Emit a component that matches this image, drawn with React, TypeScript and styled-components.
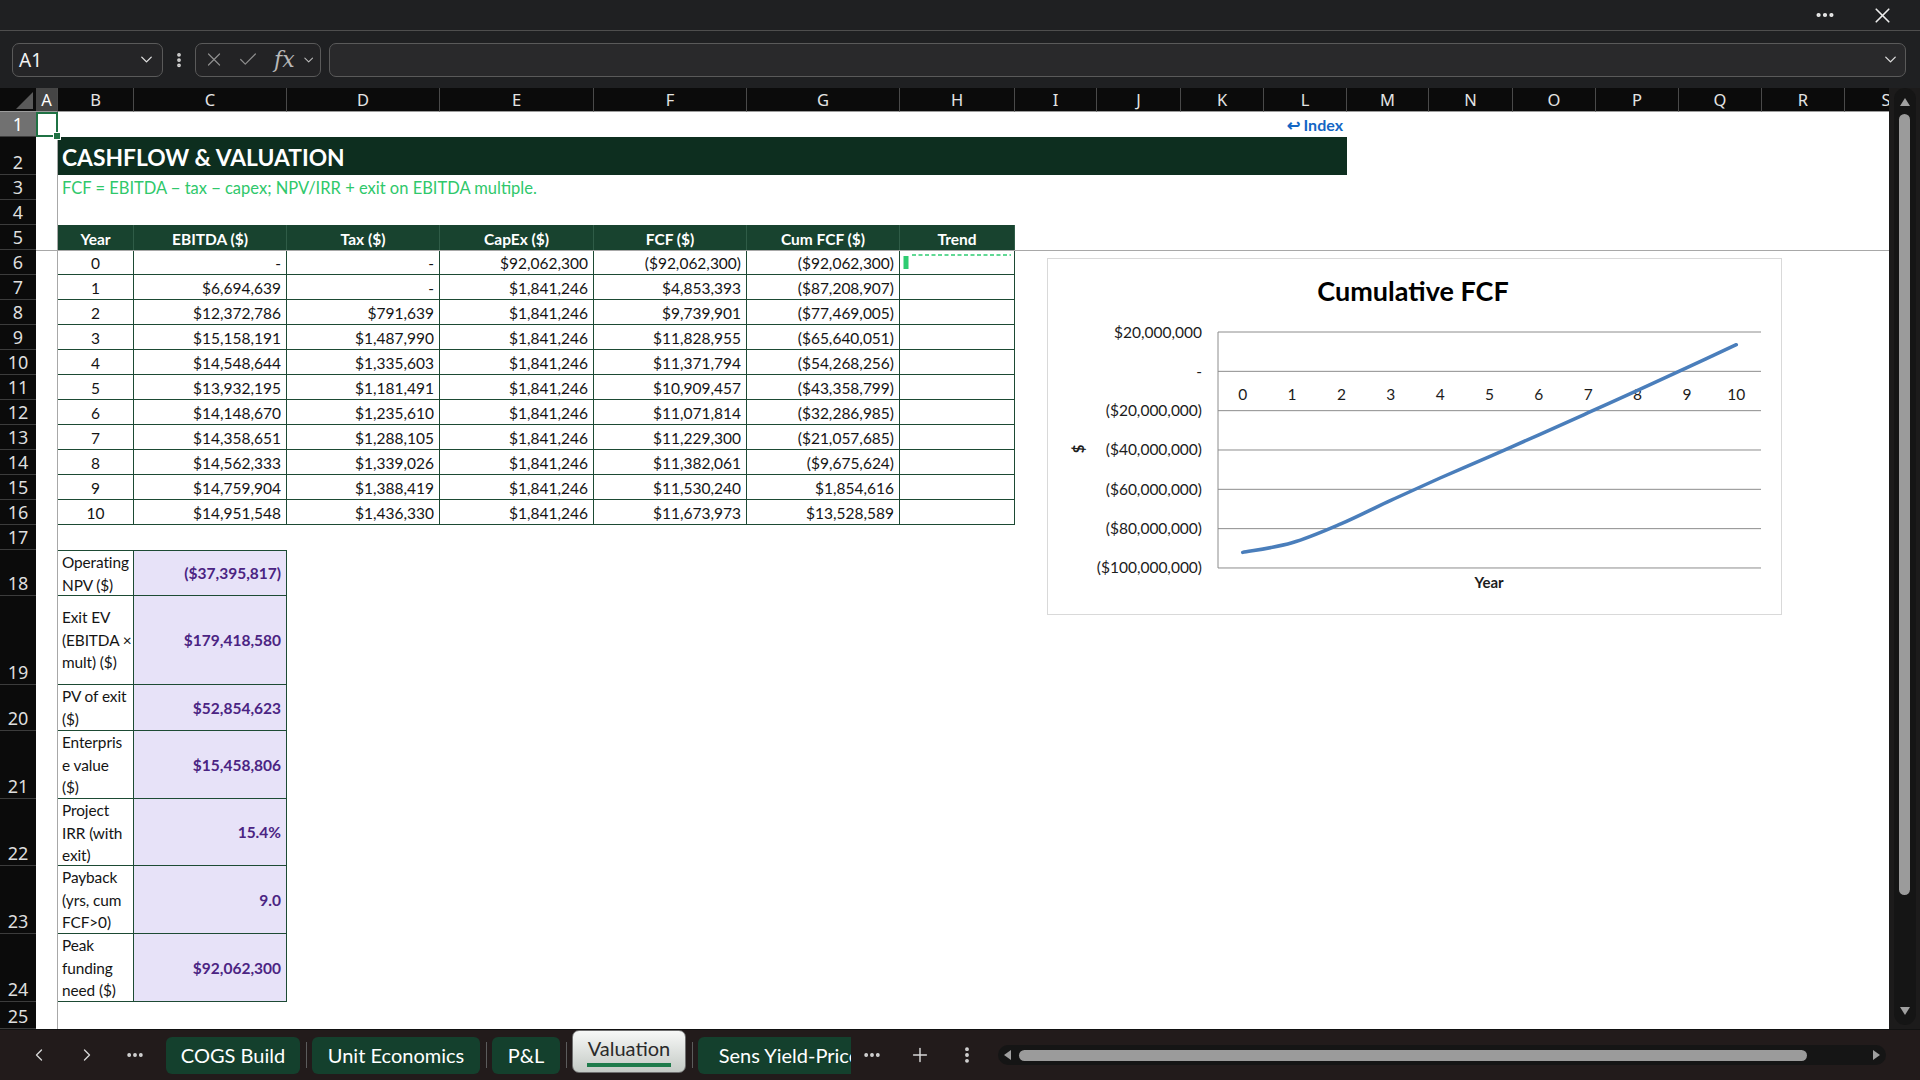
import React from "react";
import styled, { createGlobalStyle } from "styled-components";
import {
  ChevronDown,
  ChevronLeft,
  ChevronRight,
  Ellipsis,
  EllipsisVertical,
  X,
  Check,
  Plus,
} from "lucide-react";

const GlobalStyle = createGlobalStyle`
  html, body { margin: 0; padding: 0; background: #1f2022; overflow: hidden; }
  #root { width: 1920px; height: 1080px; }
  * { box-sizing: border-box; }
`;

const COLS = [36, 22, 76, 153, 153, 154, 153, 153, 115, 82, 84, 83, 83, 82, 84, 83, 83, 83, 83, 83];
const COL_TEMPLATE = COLS.map((w) => `${w}px`).join(" ");
const LETTERS = "ABCDEFGHIJKLMNOPQRS".split("");

const CELL_FONT = `Lato, "Noto Sans", sans-serif`;
const UI_FONT = `"Noto Sans", "Open Sans", sans-serif`;
const GREEN_LINE = "#1d4a34";

const TABLE = [
  ["0", "-", "-", "$92,062,300", "($92,062,300)", "($92,062,300)"],
  ["1", "$6,694,639", "-", "$1,841,246", "$4,853,393", "($87,208,907)"],
  ["2", "$12,372,786", "$791,639", "$1,841,246", "$9,739,901", "($77,469,005)"],
  ["3", "$15,158,191", "$1,487,990", "$1,841,246", "$11,828,955", "($65,640,051)"],
  ["4", "$14,548,644", "$1,335,603", "$1,841,246", "$11,371,794", "($54,268,256)"],
  ["5", "$13,932,195", "$1,181,491", "$1,841,246", "$10,909,457", "($43,358,799)"],
  ["6", "$14,148,670", "$1,235,610", "$1,841,246", "$11,071,814", "($32,286,985)"],
  ["7", "$14,358,651", "$1,288,105", "$1,841,246", "$11,229,300", "($21,057,685)"],
  ["8", "$14,562,333", "$1,339,026", "$1,841,246", "$11,382,061", "($9,675,624)"],
  ["9", "$14,759,904", "$1,388,419", "$1,841,246", "$11,530,240", "$1,854,616"],
  ["10", "$14,951,548", "$1,436,330", "$1,841,246", "$11,673,973", "$13,528,589"],
];

const HEADERS = ["Year", "EBITDA ($)", "Tax ($)", "CapEx ($)", "FCF ($)", "Cum FCF ($)", "Trend"];

/* label lines as the wrapped cell shows them */
const METRICS: { lines: string[]; value: string; h: number }[] = [
  { lines: ["Operating", "NPV ($)"], value: "($37,395,817)", h: 46 },
  { lines: ["Exit EV", "(EBITDA ×", "mult) ($)"], value: "$179,418,580", h: 89 },
  { lines: ["PV of exit", "($)"], value: "$52,854,623", h: 46 },
  { lines: ["Enterpris", "e value", "($)"], value: "$15,458,806", h: 68 },
  { lines: ["Project", "IRR (with", "exit)"], value: "15.4%", h: 67 },
  { lines: ["Payback", "(yrs, cum", "FCF>0)"], value: "9.0", h: 68 },
  { lines: ["Peak", "funding", "need ($)"], value: "$92,062,300", h: 68 },
];

const CUM = [-92.0623, -87.208907, -77.469005, -65.640051, -54.268256, -43.358799, -32.286985, -21.057685, -9.675624, 1.854616, 13.528589];

/* ---------- window chrome ---------- */

const Window = styled.div`
  width: 1920px;
  height: 1080px;
  display: flex;
  flex-direction: column;
  background: #1f2022;
  font-family: ${UI_FONT};
  overflow: hidden;
`;

const TitleBar = styled.div`
  height: 31px;
  flex: none;
  border-bottom: 1px solid #4e4e4e;
  display: flex;
  align-items: center;
  justify-content: flex-end;
  padding-right: 15px;
  gap: 11px;
  color: #ececec;
`;

const TitleBtn = styled.div`
  width: 46px;
  height: 30px;
  display: flex;
  align-items: center;
  justify-content: center;
`;

const FormulaBar = styled.div`
  height: 57px;
  flex: none;
  display: flex;
  align-items: center;
  padding: 0 14px 0 12px;
`;

const BoxBase = styled.div`
  height: 34px;
  border: 1px solid #5a5a5a;
  border-radius: 7px;
  display: flex;
  align-items: center;
`;

const NameBox = styled(BoxBase)`
  width: 151px;
  background: #252527;
  justify-content: space-between;
  padding: 0 6px 0 6px;
  color: #f2f2f2;
  font-size: 19px;
`;

const DotsSlot = styled.div`
  width: 32px;
  display: flex;
  justify-content: center;
  color: #d8d8d8;
`;

const FxBox = styled(BoxBase)`
  width: 126px;
  background: #232325;
  padding: 0 4px 0 7px;
  gap: 12px;
  color: #8e8e8e;
`;

const FxGlyph = styled.span`
  font-family: "DejaVu Serif", "Liberation Serif", serif;
  font-style: italic;
  font-size: 22px;
  color: #b8b8b8;
  margin-left: 3px;
  margin-right: -6px;
`;

const FormulaInput = styled(BoxBase)`
  flex: 1;
  margin-left: 8px;
  background: #29292b;
  justify-content: flex-end;
  padding-right: 5px;
  color: #dcdcdc;
`;

/* ---------- sheet ---------- */

const Workspace = styled.div`
  flex: 1;
  min-height: 0;
  display: flex;
`;

const Sheet = styled.div`
  width: 1889px;
  flex: none;
  position: relative;
  overflow: hidden;
  background: #ffffff;
  display: flex;
  flex-direction: column;
`;

const GridRow = styled.div<{ $h: number }>`
  display: grid;
  grid-template-columns: ${COL_TEMPLATE};
  height: ${(p) => p.$h}px;
  flex: none;
`;

const Corner = styled.div`
  background: #0b0b0b;
  position: relative;
  border-bottom: 1px solid #9c9c9c;
  &::after {
    content: "";
    position: absolute;
    right: 3px;
    bottom: 2px;
    width: 17px;
    height: 17px;
    background: #5a5a5a;
    clip-path: polygon(100% 0, 100% 100%, 0 100%);
  }
`;

const ColHead = styled.div<{ $sel?: boolean }>`
  background: ${(p) => (p.$sel ? "#454545" : "#0b0b0b")};
  color: ${(p) => (p.$sel ? "#ffffff" : "#e4e4e4")};
  border-right: 1px solid #4a4a4a;
  border-bottom: 1px solid #9c9c9c;
  font-size: 16.5px;
  display: flex;
  align-items: center;
  justify-content: center;
  overflow: hidden;
`;

const RowHead = styled.div<{ $sel?: boolean }>`
  background: ${(p) => (p.$sel ? "#717171" : "#0b0b0b")};
  color: ${(p) => (p.$sel ? "#ffffff" : "#dedede")};
  border-bottom: 1px solid #3c3c3c;
  font-size: 18px;
  line-height: 23px;
  display: flex;
  align-items: flex-end;
  justify-content: center;
  overflow: hidden;
`;

const Blank = styled.div<{ $span?: number }>`
  grid-column: span ${(p) => p.$span ?? 1};
`;

const SelCell = styled.div`
  position: relative;
  box-shadow: inset 0 0 0 2px #1f7244;
  &::after {
    content: "";
    position: absolute;
    right: -3px;
    bottom: -3px;
    width: 6px;
    height: 6px;
    background: #1f7244;
    border: 1px solid #ffffff;
    z-index: 3;
  }
`;

const IndexCell = styled.div`
  grid-column: span 2;
  display: flex;
  align-items: center;
  justify-content: flex-end;
  padding-right: 4px;
  font-family: ${CELL_FONT};
  font-weight: 700;
  font-size: 16px;
  color: #1366c4;
  white-space: nowrap;
`;

const TitleCell = styled.div`
  grid-column: span 11;
  background: #0d2e1f;
  color: #ffffff;
  font-family: ${CELL_FONT};
  font-weight: 700;
  font-size: 22.8px;
  display: flex;
  align-items: center;
  padding: 2px 0 0 4px;
  white-space: nowrap;
`;

const NoteCell = styled.div`
  grid-column: span 11;
  color: #2fc86b;
  font-family: ${CELL_FONT};
  font-size: 16.5px;
  display: flex;
  align-items: center;
  padding-left: 4px;
  white-space: nowrap;
`;

const Th = styled.div`
  background: #18432f;
  color: #ffffff;
  font-family: ${CELL_FONT};
  font-weight: 700;
  font-size: 15.5px;
  display: flex;
  align-items: center;
  justify-content: center;
  padding-top: 2px;
  border-right: 1px solid #2f5c47;
  white-space: nowrap;
`;

const Td = styled.div<{ $align: "center" | "right" }>`
  border-right: 1px solid ${GREEN_LINE};
  border-bottom: 1px solid ${GREEN_LINE};
  color: #141414;
  font-family: ${CELL_FONT};
  font-size: 15.5px;
  display: flex;
  align-items: center;
  justify-content: ${(p) => (p.$align === "center" ? "center" : "flex-end")};
  padding: 1px 5px 0 5px;
  white-space: nowrap;
  overflow: hidden;
`;

const TrendCell = styled.div`
  border-right: 1px solid ${GREEN_LINE};
  border-bottom: 1px solid ${GREEN_LINE};
  overflow: hidden;
`;

const MLabel = styled.div<{ $top?: boolean }>`
  border-right: 1px solid ${GREEN_LINE};
  border-bottom: 1px solid ${GREEN_LINE};
  border-top: ${(p) => (p.$top ? `1px solid ${GREEN_LINE}` : "none")};
  color: #141414;
  font-family: ${CELL_FONT};
  font-size: 15.4px;
  line-height: 22.5px;
  letter-spacing: -0.1px;
  padding: 0 1px 0 4px;
  display: flex;
  flex-direction: column;
  justify-content: center;
  justify-content: safe center;
  overflow: hidden;
  white-space: nowrap;
`;

const MLine = styled.span`
  display: block;
`;

const MValue = styled.div<{ $top?: boolean }>`
  background: #e7e2f8;
  border-right: 1px solid ${GREEN_LINE};
  border-bottom: 1px solid ${GREEN_LINE};
  border-top: ${(p) => (p.$top ? `1px solid ${GREEN_LINE}` : "none")};
  color: #4b2483;
  font-family: ${CELL_FONT};
  font-weight: 700;
  font-size: 15.5px;
  display: flex;
  align-items: center;
  justify-content: flex-end;
  padding-right: 5px;
  white-space: nowrap;
`;

const FreezeV = styled.div`
  position: absolute;
  left: 57px;
  top: 49px;
  bottom: 0;
  width: 1px;
  background: #a8a8a8;
`;

const FreezeH = styled.div`
  position: absolute;
  left: 36px;
  right: 0;
  top: 162px;
  height: 1px;
  background: #a8a8a8;
`;

const ChartFrame = styled.div`
  position: absolute;
  left: 1047px;
  top: 170px;
  width: 735px;
  height: 357px;
  background: #ffffff;
  border: 1px solid #d9d9d9;
`;

const ChartSvg = styled.svg`
  display: block;
  text {
    font-family: ${CELL_FONT};
    fill: #1c1c1c;
  }
`;

/* ---------- scrollbars & tabs ---------- */

const VScroll = styled.div`
  flex: 1;
  background: #1c1b1b;
  display: flex;
  justify-content: center;
`;

const VTrack = styled.div`
  width: 22px;
  height: 937px;
  background: #151515;
  border-radius: 11px;
  display: flex;
  flex-direction: column;
  align-items: center;
  padding: 10px 0 10px;
`;

const ArrowUp = styled.div`
  width: 0;
  height: 0;
  border-left: 5px solid transparent;
  border-right: 5px solid transparent;
  border-bottom: 8px solid #a0a0a0;
`;

const ArrowDown = styled.div`
  width: 0;
  height: 0;
  border-left: 5px solid transparent;
  border-right: 5px solid transparent;
  border-top: 8px solid #a0a0a0;
  margin-top: auto;
`;

const VThumb = styled.div`
  width: 11px;
  height: 781px;
  margin-top: 8px;
  border-radius: 6px;
  background: #9b9b9b;
`;

const TabBar = styled.div`
  height: 51px;
  flex: none;
  background: #221b1b;
  border-top: 1px solid #111111;
  display: flex;
  align-items: center;
  padding-left: 15px;
  color: #d6d6d6;
`;

const NavBtn = styled.div<{ $w?: number }>`
  width: ${(p) => p.$w ?? 48}px;
  height: 36px;
  flex: none;
  display: flex;
  align-items: center;
  justify-content: center;
`;

const TabStrip = styled.div`
  width: 685px;
  height: 100%;
  flex: none;
  margin-left: 7px;
  overflow: hidden;
  display: flex;
  align-items: center;
`;

const Tab = styled.div<{ $w: number }>`
  width: ${(p) => p.$w}px;
  height: 37px;
  flex: none;
  background: #14402d;
  border-radius: 6px;
  color: #ffffff;
  font-family: ${CELL_FONT};
  font-size: 20px;
  display: flex;
  align-items: center;
  justify-content: center;
  white-space: nowrap;
  overflow: hidden;
`;

const ActiveTab = styled.div<{ $w: number }>`
  width: ${(p) => p.$w}px;
  height: 43px;
  flex: none;
  align-self: flex-end;
  margin-bottom: 7px;
  background: linear-gradient(#f7f8f7, #c4cac5);
  border: 1px solid #6e6e6e;
  border-radius: 7px;
  color: #2a2a2a;
  font-family: ${CELL_FONT};
  font-size: 20px;
  display: flex;
  align-items: center;
  justify-content: center;
  padding-bottom: 1px;
`;

const ActiveLabel = styled.span`
  line-height: 24px;
  padding: 0 1px 3px;
  border-bottom: 4px solid #1e7b4b;
`;

const TabSep = styled.div`
  width: 1px;
  height: 26px;
  flex: none;
  margin: 0 5px 0 6px;
  background: #5c5c5c;
`;

const HScroll = styled.div`
  width: 888px;
  height: 20px;
  margin-left: 11px;
  background: #151515;
  border-radius: 10px;
  display: flex;
  align-items: center;
  padding: 0 6px;
`;

const ArrowLeft = styled.div`
  width: 0;
  height: 0;
  border-top: 5px solid transparent;
  border-bottom: 5px solid transparent;
  border-right: 7px solid #a0a0a0;
`;

const ArrowRight = styled.div`
  width: 0;
  height: 0;
  border-top: 5px solid transparent;
  border-bottom: 5px solid transparent;
  border-left: 7px solid #a0a0a0;
  margin-left: auto;
`;

const HThumb = styled.div`
  width: 788px;
  height: 11px;
  margin-left: 8px;
  border-radius: 6px;
  background: #9b9b9b;
`;

/* ---------- pieces ---------- */

function Sparkline() {
  return (
    <svg width="114" height="24" viewBox="0 0 114 24">
      <rect x="3.5" y="6" width="5" height="13" fill="#2ecc71" />
      <line x1="12" y1="5" x2="111" y2="5" stroke="#2ecc71" strokeWidth="1.5" strokeDasharray="4 2.5" />
    </svg>
  );
}

function Chart() {
  const left = 171;
  const right = 714;
  const top = 74;
  const step = 39.33;
  const zeroY = top + step;
  const colW = (right - left) / 11;
  const pts = CUM.map((v, i) => [left + colW * (i + 0.5), zeroY - (v * step) / 20]);
  let d = `M${pts[0][0].toFixed(1)},${pts[0][1].toFixed(1)}`;
  for (let i = 0; i < pts.length - 1; i++) {
    const p0 = pts[i - 1] || pts[i];
    const p1 = pts[i];
    const p2 = pts[i + 1];
    const p3 = pts[i + 2] || p2;
    const c1 = [p1[0] + (p2[0] - p0[0]) / 6, p1[1] + (p2[1] - p0[1]) / 6];
    const c2 = [p2[0] - (p3[0] - p1[0]) / 6, p2[1] - (p3[1] - p1[1]) / 6];
    d += ` C${c1[0].toFixed(1)},${c1[1].toFixed(1)} ${c2[0].toFixed(1)},${c2[1].toFixed(1)} ${p2[0].toFixed(1)},${p2[1].toFixed(1)}`;
  }
  const yLabels = ["$20,000,000", "-", "($20,000,000)", "($40,000,000)", "($60,000,000)", "($80,000,000)", "($100,000,000)"];
  return (
    <ChartSvg width="733" height="355" viewBox="1 1 733 355">
      <text x="366" y="43" textAnchor="middle" fontSize="27" fontWeight="700" style={{ fill: "#000" }}>
        Cumulative FCF
      </text>
      {yLabels.map((l, i) => (
        <g key={l}>
          <line x1={left} x2={right} y1={top + i * step} y2={top + i * step} stroke="#8c8c8c" strokeWidth="1" />
          <text x="155" y={top + i * step + 5.5} textAnchor="end" fontSize="15.5">
            {l}
          </text>
        </g>
      ))}
      <line x1={left} x2={left} y1={top} y2={top + 6 * step} stroke="#8c8c8c" strokeWidth="1" />
      {CUM.map((_, i) => (
        <text key={i} x={left + colW * (i + 0.5)} y="141.5" textAnchor="middle" fontSize="15.5">
          {i}
        </text>
      ))}
      <path d={d} fill="none" stroke="#4a7ebb" strokeWidth="3.5" strokeLinecap="round" />
      <text x="442" y="330" textAnchor="middle" fontSize="15" fontWeight="700">
        Year
      </text>
      <text x="32" y="196" textAnchor="middle" fontSize="15" fontWeight="700" transform="rotate(-90 32 191)">
        $
      </text>
    </ChartSvg>
  );
}

export default function App() {
  return (
    <>
      <GlobalStyle />
      <Window>
        <TitleBar>
          <TitleBtn>
            <Ellipsis size={22} strokeWidth={2.6} />
          </TitleBtn>
          <TitleBtn>
            <X size={25} strokeWidth={1.6} />
          </TitleBtn>
        </TitleBar>

        <FormulaBar>
          <NameBox>
            <span>A1</span>
            <ChevronDown size={19} strokeWidth={1.7} color="#e0e0e0" />
          </NameBox>
          <DotsSlot>
            <EllipsisVertical size={18} strokeWidth={3} />
          </DotsSlot>
          <FxBox>
            <X size={23} strokeWidth={1.3} />
            <Check size={23} strokeWidth={1.3} />
            <FxGlyph>fx</FxGlyph>
            <ChevronDown size={16} strokeWidth={1.6} color="#bdbdbd" />
          </FxBox>
          <FormulaInput>
            <ChevronDown size={19} strokeWidth={1.7} />
          </FormulaInput>
        </FormulaBar>

        <Workspace>
          <Sheet>
            <GridRow $h={24}>
              <Corner />
              {LETTERS.map((l) => (
                <ColHead key={l} $sel={l === "A"}>
                  {l}
                </ColHead>
              ))}
            </GridRow>

            <GridRow $h={25}>
              <RowHead $sel>1</RowHead>
              <SelCell />
              <Blank $span={9} />
              <IndexCell>↩ Index</IndexCell>
            </GridRow>

            <GridRow $h={38}>
              <RowHead>2</RowHead>
              <Blank />
              <TitleCell>CASHFLOW &amp; VALUATION</TitleCell>
            </GridRow>

            <GridRow $h={25}>
              <RowHead>3</RowHead>
              <Blank />
              <NoteCell>FCF = EBITDA − tax − capex; NPV/IRR + exit on EBITDA multiple.</NoteCell>
            </GridRow>

            <GridRow $h={25}>
              <RowHead>4</RowHead>
            </GridRow>

            <GridRow $h={25}>
              <RowHead>5</RowHead>
              <Blank />
              {HEADERS.map((h) => (
                <Th key={h}>{h}</Th>
              ))}
            </GridRow>

            {TABLE.map((r, i) => (
              <GridRow $h={25} key={r[0]}>
                <RowHead>{i + 6}</RowHead>
                <Blank />
                {r.map((c, j) => (
                  <Td key={j} $align={j === 0 ? "center" : "right"}>
                    {c}
                  </Td>
                ))}
                <TrendCell>{i === 0 ? <Sparkline /> : null}</TrendCell>
              </GridRow>
            ))}

            <GridRow $h={25}>
              <RowHead>17</RowHead>
            </GridRow>

            {METRICS.map((m, i) => (
              <GridRow $h={m.h} key={m.value + i}>
                <RowHead>{i + 18}</RowHead>
                <Blank />
                <MLabel $top={i === 0}>
                  {m.lines.map((ln) => (
                    <MLine key={ln}>{ln}</MLine>
                  ))}
                </MLabel>
                <MValue $top={i === 0}>{m.value}</MValue>
              </GridRow>
            ))}

            <GridRow $h={27}>
              <RowHead>25</RowHead>
            </GridRow>

            <FreezeV />
            <FreezeH />
            <ChartFrame>
              <Chart />
            </ChartFrame>
          </Sheet>

          <VScroll>
            <VTrack>
              <ArrowUp />
              <VThumb />
              <ArrowDown />
            </VTrack>
          </VScroll>
        </Workspace>

        <TabBar>
          <NavBtn>
            <ChevronLeft size={20} strokeWidth={1.6} />
          </NavBtn>
          <NavBtn>
            <ChevronRight size={20} strokeWidth={1.6} />
          </NavBtn>
          <NavBtn>
            <Ellipsis size={20} strokeWidth={2.6} />
          </NavBtn>
          <TabStrip>
            <Tab $w={134}>COGS Build</Tab>
            <TabSep />
            <Tab $w={168}>Unit Economics</Tab>
            <TabSep />
            <Tab $w={68}>P&amp;L</Tab>
            <TabSep />
            <ActiveTab $w={114}>
              <ActiveLabel>Valuation</ActiveLabel>
            </ActiveTab>
            <TabSep />
            <Tab $w={182}>Sens Yield-Price</Tab>
          </TabStrip>
          <NavBtn $w={42}>
            <Ellipsis size={20} strokeWidth={2.6} />
          </NavBtn>
          <NavBtn $w={54}>
            <Plus size={22} strokeWidth={1.6} />
          </NavBtn>
          <NavBtn $w={40}>
            <EllipsisVertical size={20} strokeWidth={2.6} />
          </NavBtn>
          <HScroll>
            <ArrowLeft />
            <HThumb />
            <ArrowRight />
          </HScroll>
        </TabBar>
      </Window>
    </>
  );
}
